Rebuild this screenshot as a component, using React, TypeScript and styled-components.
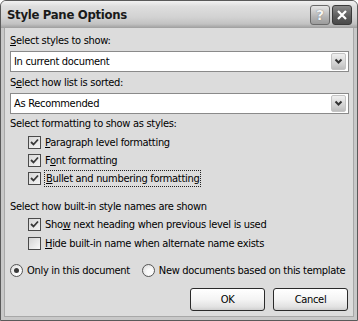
import React from "react";
import styled, { createGlobalStyle } from "styled-components";

const Global = createGlobalStyle`
  html, body { margin: 0; padding: 0; background: #ffffff; }
  body { font-family: "DejaVu Sans Condensed", "Liberation Sans", sans-serif; font-size: 11px; letter-spacing: -0.3px; color: #000; }
`;

const Window = styled.div`
  width: 358px;
  height: 321px;
  box-sizing: border-box;
  border: 1px solid #5a5a5a;
  border-radius: 6px 6px 0 0;
  background: #c8c8c8;
  display: flex;
  flex-direction: column;
  overflow: hidden;
`;

const TitleBar = styled.div`
  height: 27px;
  flex: none;
  display: flex;
  align-items: center;
  padding: 0 5px 0 6px;
  background: linear-gradient(#f2f2f2 0%, #dedede 20%, #d2d2d2 60%, #c2c2c2 85%, #9e9e9e 100%);
`;

const Title = styled.div`
  flex: 1;
  font-family: "DejaVu Sans Condensed", "Liberation Sans", sans-serif;
  font-weight: bold;
  font-size: 13px;
  letter-spacing: -0.3px;
  color: #1a1a1a;
`;

const TitleButton = styled.div<{ $dark?: boolean }>`
  width: 20px;
  height: 20px;
  box-sizing: border-box;
  margin-left: 2px;
  border: 1px solid ${(p) => (p.$dark ? "#3a3a3a" : "#6a6a6a")};
  border-radius: 3px;
  display: flex;
  align-items: center;
  justify-content: center;
  background: ${(p) =>
    p.$dark
      ? "linear-gradient(#8a8a8a, #5a5a5a 60%, #4a4a4a)"
      : "linear-gradient(#e6e6e6, #b4b4b4 60%, #9c9c9c)"};
  color: ${(p) => (p.$dark ? "#fff" : "#f4f4f4")};
  text-shadow: ${(p) => (p.$dark ? "none" : "0 0 1px #555")};
  font-family: "DejaVu Sans", sans-serif;
  font-weight: bold;
  font-size: 14px;
  letter-spacing: 0;
`;

const Client = styled.div`
  flex: 1;
  margin: 0 3px 3px 3px;
  background: #dcdcdc;
  border: 1px solid #a8a8a8;
  border-top: none;
  padding: 5px 4px 0 5px;
  display: flex;
  flex-direction: column;
`;

const Label = styled.div<{ $mt?: number }>`
  line-height: 14px;
  margin-top: ${(p) => p.$mt ?? 0}px;
  white-space: nowrap;
`;

const Key = styled.span`
  text-decoration: underline;
  text-underline-offset: 1px;
`;

const Select = styled.div<{ $mt?: number }>`
  margin-top: ${(p) => p.$mt ?? 0}px;
  height: 21px;
  box-sizing: border-box;
  border: 1px solid #8a8a8a;
  background: #fff;
  display: flex;
  align-items: center;
  padding: 1px 2px 1px 3px;
`;

const SelectText = styled.div`
  flex: 1;
  line-height: 14px;
`;

const DropButton = styled.div`
  width: 15px;
  height: 17px;
  box-sizing: border-box;
  border: 1px solid #c4c4c4;
  border-radius: 2px;
  background: linear-gradient(#f0f0f0, #cfcfcf 70%, #bdbdbd);
  display: flex;
  align-items: center;
  justify-content: center;
`;

const Rows = styled.div<{ $mt?: number }>`
  margin-top: ${(p) => p.$mt ?? 0}px;
  display: flex;
  flex-direction: column;
  padding-left: 18px;
`;

const Row = styled.div<{ $h?: number }>`
  height: ${(p) => p.$h ?? 18}px;
  display: flex;
  align-items: center;
  white-space: nowrap;
`;

const Box = styled.span<{ $checked?: boolean }>`
  width: 13px;
  height: 13px;
  box-sizing: border-box;
  border: 1px solid #4a4a4a;
  background: ${(p) =>
    p.$checked ? "linear-gradient(135deg, #d8d8d8, #f4f4f4)" : "linear-gradient(135deg, #d4d4d4, #fafafa)"};
  display: flex;
  align-items: center;
  justify-content: center;
  margin-right: 4px;
  flex: none;
`;

const Focus = styled.span`
  outline: 1px dotted #222;
  outline-offset: 0px;
  padding: 0 1px;
  line-height: 15px;
`;

const RadioRow = styled.div`
  margin-top: 10px;
  height: 14px;
  display: flex;
  align-items: center;
  white-space: nowrap;
`;

const Radio = styled.span<{ $on?: boolean }>`
  width: 13px;
  height: 13px;
  box-sizing: border-box;
  border-radius: 50%;
  border: 1px solid #555;
  background: radial-gradient(circle at 65% 65%, #fafafa 30%, #d6d6d6 100%);
  display: inline-flex;
  align-items: center;
  justify-content: center;
  margin-right: 4px;
  flex: none;
  &::after {
    content: "";
    display: ${(p) => (p.$on ? "block" : "none")};
    width: 5px;
    height: 5px;
    border-radius: 50%;
    background: #3a3a3a;
  }
`;

const RadioGap = styled.span`
  width: 12px;
  flex: none;
`;

const ButtonBar = styled.div`
  margin-top: 11px;
  display: flex;
  justify-content: flex-end;
  gap: 8px;
  padding-right: 1px;
`;

const Button = styled.div`
  width: 75px;
  height: 23px;
  box-sizing: border-box;
  border: 1px solid #2a2a2a;
  border-radius: 3px;
  background: linear-gradient(#ffffff, #f4f4f4 50%, #e2e2e2 85%, #cfcfcf);
  display: flex;
  align-items: center;
  justify-content: center;
`;

const Chevron = () => (
  <svg width="9" height="7" viewBox="0 0 9 7">
    <path d="M1.5 1.5 L4.5 4.5 L7.5 1.5" fill="none" stroke="#333" strokeWidth="2" />
  </svg>
);

const Check = () => (
  <svg width="9" height="9" viewBox="0 0 9 9">
    <path d="M1 4 L3.5 6.5 L8 1.5" fill="none" stroke="#3a3a3a" strokeWidth="1.8" />
  </svg>
);

export default function App() {
  return (
    <>
      <Global />
      <Window>
        <TitleBar>
          <Title>Style Pane Options</Title>
          <TitleButton>?</TitleButton>
          <TitleButton $dark>
            <svg width="12" height="12" viewBox="0 0 12 12">
              <path d="M2 2 L10 10 M10 2 L2 10" stroke="#fff" strokeWidth="2.2" />
            </svg>
          </TitleButton>
        </TitleBar>
        <Client>
          <Label $mt={1}>
            <Key>S</Key>elect styles to show:
          </Label>
          <Select $mt={3}>
            <SelectText>In current document</SelectText>
            <DropButton>
              <Chevron />
            </DropButton>
          </Select>
          <Label $mt={4}>
            S<Key>e</Key>lect how list is sorted:
          </Label>
          <Select $mt={3}>
            <SelectText>As Recommended</SelectText>
            <DropButton>
              <Chevron />
            </DropButton>
          </Select>
          <Label $mt={3}>Select formatting to show as styles:</Label>
          <Rows $mt={2}>
            <Row>
              <Box $checked>
                <Check />
              </Box>
              <span>
                <Key>P</Key>aragraph level formatting
              </span>
            </Row>
            <Row>
              <Box $checked>
                <Check />
              </Box>
              <span>
                F<Key>o</Key>nt formatting
              </span>
            </Row>
            <Row>
              <Box $checked>
                <Check />
              </Box>
              <Focus>
                <Key>B</Key>ullet and numbering formatting
              </Focus>
            </Row>
          </Rows>
          <Label $mt={13}>Select how built-in style names are shown</Label>
          <Rows $mt={1}>
            <Row $h={19}>
              <Box $checked>
                <Check />
              </Box>
              <span>
                Sho<Key>w</Key> next heading when previous level is used
              </span>
            </Row>
            <Row $h={19}>
              <Box />
              <span>
                <Key>H</Key>ide built-in name when alternate name exists
              </span>
            </Row>
          </Rows>
          <RadioRow>
            <Radio $on />
            <span>Only in this document</span>
            <RadioGap />
            <Radio />
            <span>New documents based on this template</span>
          </RadioRow>
          <ButtonBar>
            <Button>OK</Button>
            <Button>Cancel</Button>
          </ButtonBar>
        </Client>
      </Window>
    </>
  );
}
